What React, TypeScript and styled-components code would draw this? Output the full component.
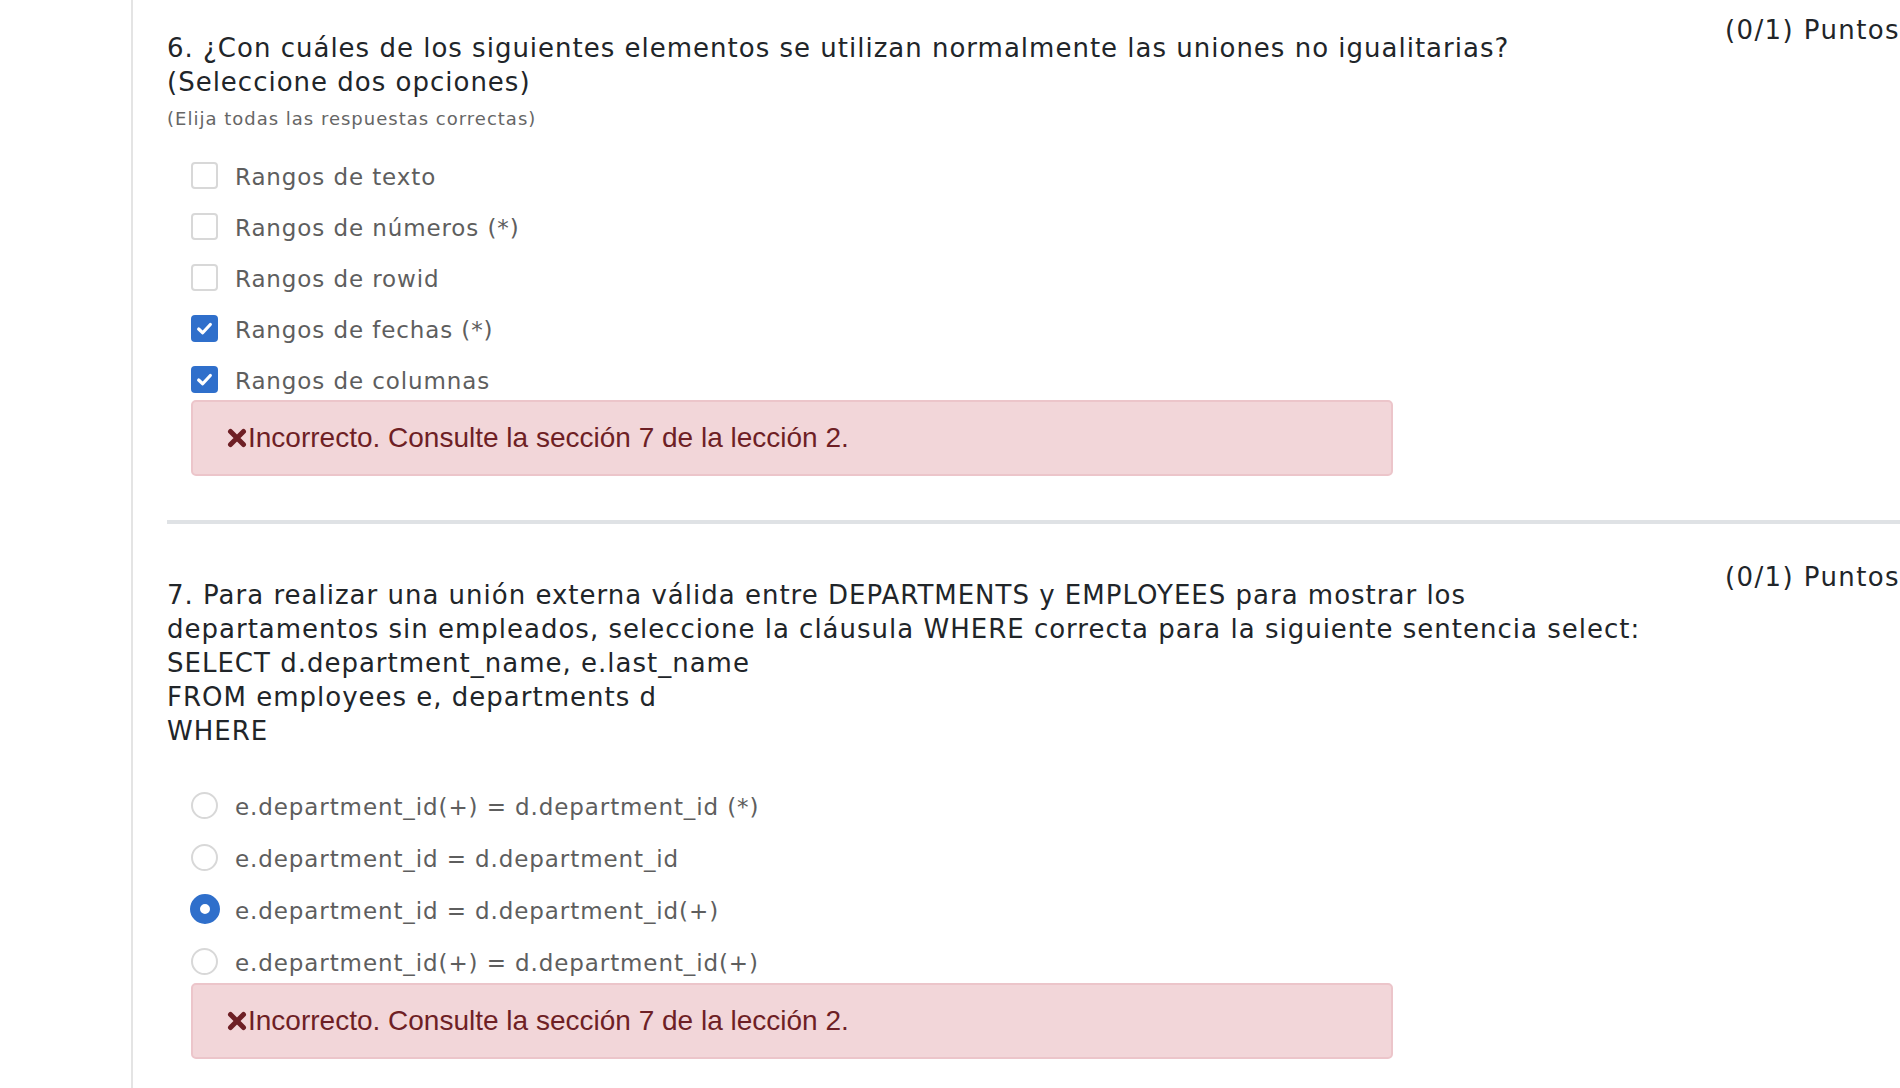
import styled, { createGlobalStyle } from 'styled-components';

const GlobalStyle = createGlobalStyle`
  html, body {
    margin: 0;
    padding: 0;
    background: #ffffff;
    overflow: hidden;
  }
`;

const Page = styled.div`
  display: flex;
  width: 1900px;
  height: 1088px;
  overflow: hidden;
`;

const Gutter = styled.div`
  width: 131px;
  flex-shrink: 0;
  border-right: 2px solid #e4e4e4;
`;

const Content = styled.div`
  flex: 1;
  padding: 13px 0 0 34px;
  font-family: 'DejaVu Sans', Verdana, sans-serif;
`;

const Question = styled.section``;

const Header = styled.div`
  display: flex;
  justify-content: space-between;
  align-items: flex-start;
`;

const Title = styled.h2`
  margin: 18px 0 0;
  font-size: 26px;
  letter-spacing: 1px;
  font-weight: 400;
  line-height: 34px;
  color: #212529;
  white-space: nowrap;
`;

const Points = styled.div`
  font-size: 26px;
  letter-spacing: 1.4px;
  line-height: 34px;
  color: #212529;
  white-space: nowrap;
`;

const Hint = styled.p`
  margin: 8px 0 0;
  font-size: 18px;
  letter-spacing: 1px;
  line-height: 24px;
  color: #666666;
`;

const Options = styled.ul<{ $top: number; $gap: number }>`
  list-style: none;
  margin: ${(p) => p.$top}px 0 0;
  padding: 0 0 0 24px;
  display: flex;
  flex-direction: column;
  gap: ${(p) => p.$gap}px;
`;

const Option = styled.li`
  display: flex;
  align-items: center;
  height: 36px;
  font-size: 23px;
  letter-spacing: 0.9px;
  color: #5e5e5e;
`;

const Check = styled.span<{ $checked?: boolean }>`
  width: 27px;
  height: 27px;
  box-sizing: border-box;
  border-radius: 4px;
  margin-right: 17px;
  margin-top: -4px;
  display: flex;
  align-items: center;
  justify-content: center;
  border: ${(p) => (p.$checked ? 'none' : '2px solid #d8d8d8')};
  background: ${(p) => (p.$checked ? '#2f6fcb' : '#ffffff')};
`;

const Radio = styled.span<{ $checked?: boolean }>`
  width: 27px;
  height: 27px;
  box-sizing: border-box;
  border-radius: 50%;
  margin-right: 17px;
  margin-top: -4px;
  flex-shrink: 0;
  border: ${(p) => (p.$checked ? '10px solid #2f6fcb' : '2px solid #d8d8d8')};
  background: #ffffff;
  ${(p) => p.$checked && 'width: 30px; height: 30px; margin-left: -1px; margin-right: 15px;'}
`;

const Feedback = styled.div<{ $top: number }>`
  margin: ${(p) => p.$top}px 0 0 24px;
  width: 1202px;
  height: 76px;
  box-sizing: border-box;
  padding: 0 0 0 34px;
  display: flex;
  align-items: center;
  background: #f2d6d9;
  border: 2px solid #ecc5ca;
  border-radius: 5px;
  font-family: 'Liberation Sans', Arial, sans-serif;
  font-size: 28px;
  color: #6e1f25;
`;

const Cross = styled.svg`
  width: 20px;
  height: 20px;
  margin-right: 1px;
`;

const Divider = styled.hr`
  margin: 44px 0 36px;
  border: none;
  height: 4px;
  background: #dfe2e5;
`;

const CheckMark = () => (
  <svg width="17" height="17" viewBox="0 0 16 16">
    <path d="M2.5 8.5 L6.3 12 L13.5 4.2" fill="none" stroke="#ffffff" strokeWidth="3" strokeLinecap="round" strokeLinejoin="round" />
  </svg>
);

const FeedbackBox = ({ top }: { top: number }) => (
  <Feedback $top={top}>
    <Cross viewBox="0 0 20 20">
      <path d="M3.5 3.5 L16.5 16.5 M16.5 3.5 L3.5 16.5" stroke="#6e1f25" strokeWidth="5" strokeLinecap="round" />
    </Cross>
    Incorrecto. Consulte la sección 7 de la lección 2.
  </Feedback>
);

const checks = [
  { label: 'Rangos de texto', checked: false },
  { label: 'Rangos de números (*)', checked: false },
  { label: 'Rangos de rowid', checked: false },
  { label: 'Rangos de fechas (*)', checked: true },
  { label: 'Rangos de columnas', checked: true },
];

const radios = [
  { label: 'e.department_id(+) = d.department_id (*)', checked: false },
  { label: 'e.department_id = d.department_id', checked: false },
  { label: 'e.department_id = d.department_id(+)', checked: true },
  { label: 'e.department_id(+) = d.department_id(+)', checked: false },
];

export default function App() {
  return (
    <>
      <GlobalStyle />
      <Page>
        <Gutter />
        <Content>
          <Question>
            <Header>
              <Title>
                6. ¿Con cuáles de los siguientes elementos se utilizan normalmente las uniones no igualitarias?
                <br />
                (Seleccione dos opciones)
              </Title>
              <Points>(0/1) Puntos</Points>
            </Header>
            <Hint>(Elija todas las respuestas correctas)</Hint>
            <Options $top={28} $gap={15}>
              {checks.map((c) => (
                <Option key={c.label}>
                  <Check $checked={c.checked}>{c.checked && <CheckMark />}</Check>
                  {c.label}
                </Option>
              ))}
            </Options>
            <FeedbackBox top={1} />
          </Question>
          <Divider />
          <Question>
            <Header>
              <Title>
                7. Para realizar una unión externa válida entre DEPARTMENTS y EMPLOYEES para mostrar los
                <br />
                departamentos sin empleados, seleccione la cláusula WHERE correcta para la siguiente sentencia select:
                <br />
                SELECT d.department_name, e.last_name
                <br />
                FROM employees e, departments d
                <br />
                WHERE
              </Title>
              <Points>(0/1) Puntos</Points>
            </Header>
            <Options $top={41} $gap={16}>
              {radios.map((r) => (
                <Option key={r.label}>
                  <Radio $checked={r.checked} />
                  {r.label}
                </Option>
              ))}
            </Options>
            <FeedbackBox top={2} />
          </Question>
        </Content>
      </Page>
    </>
  );
}
